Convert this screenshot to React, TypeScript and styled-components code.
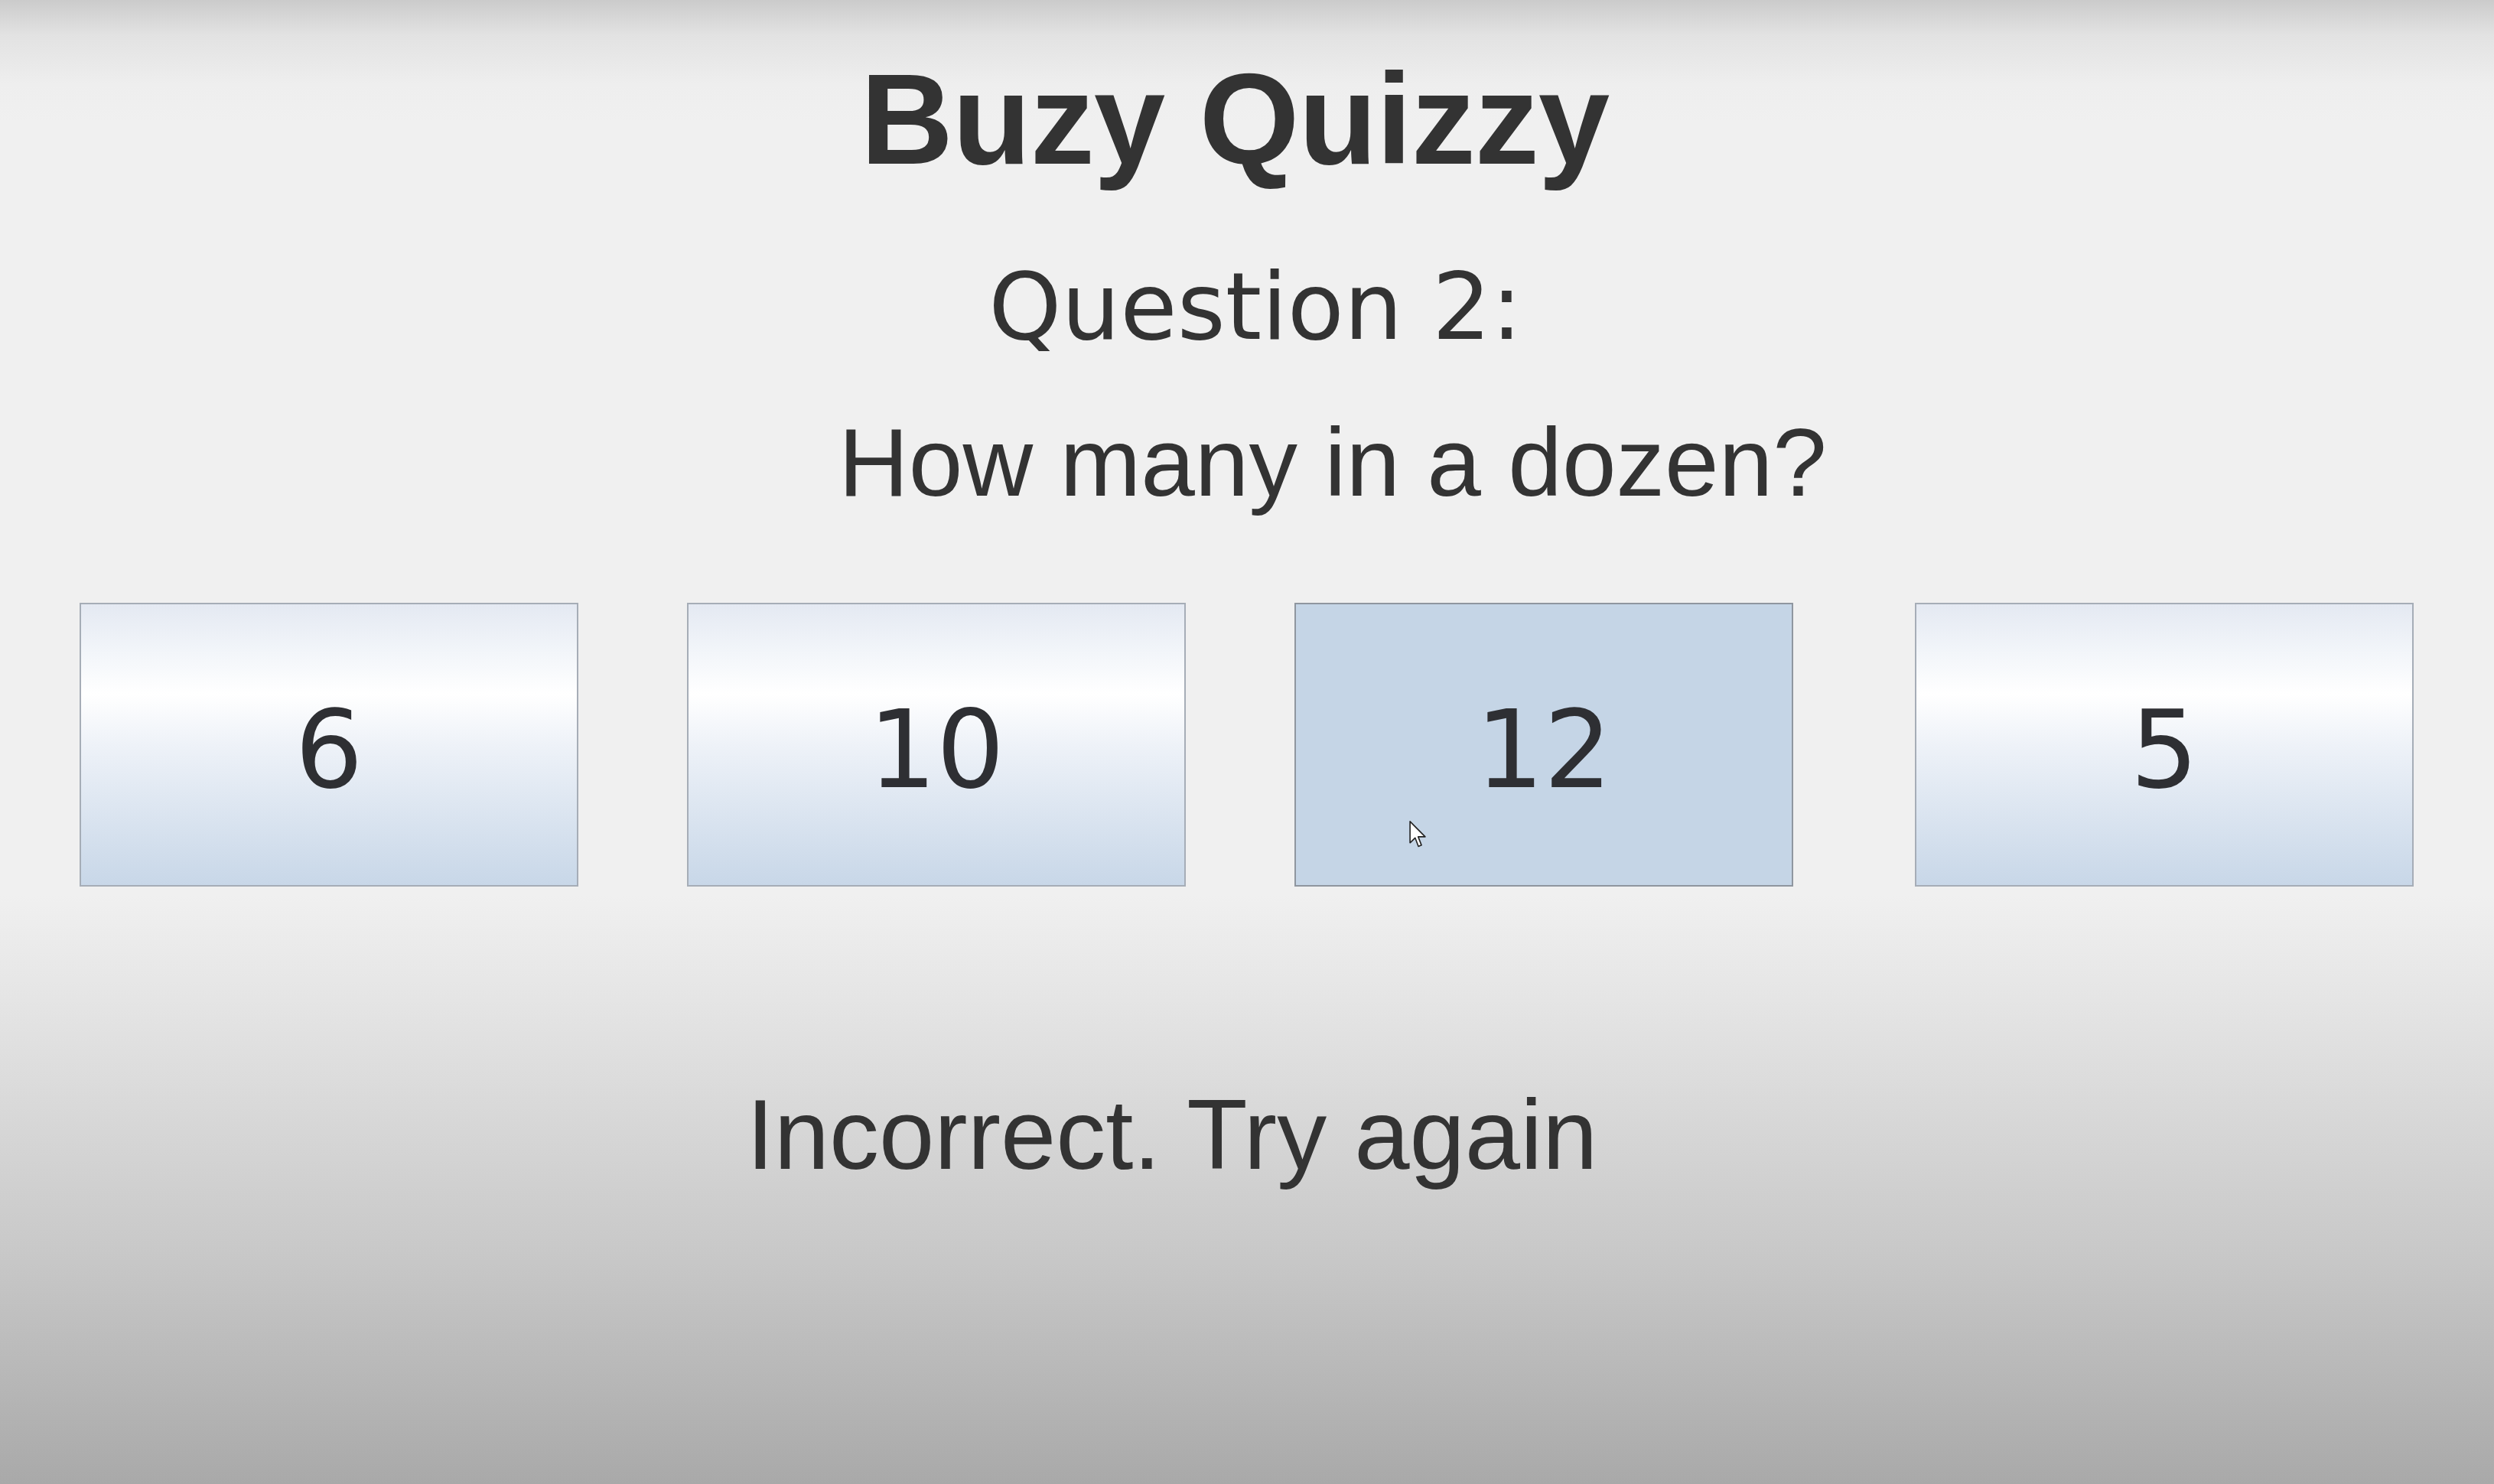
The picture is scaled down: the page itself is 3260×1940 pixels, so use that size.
import React from "react";
import styled, { createGlobalStyle } from "styled-components";

const Global = createGlobalStyle`
  html, body { margin: 0; padding: 0; }
  body { font-family: "Liberation Sans", Arial, sans-serif; }
`;

const Page = styled.div`
  width: 3260px;
  height: 1940px;
  overflow: hidden;
  display: flex;
  flex-direction: column;
  align-items: stretch;
  background: linear-gradient(
    to bottom,
    #cbcbcb 0px,
    #e2e2e2 45px,
    #eeeeee 110px,
    #f0f0f0 160px,
    #f0f0f0 1170px,
    #e3e3e3 1330px,
    #d6d6d6 1480px,
    #c8c8c8 1640px,
    #a9a9a9 1940px
  );
  color: #333333;
`;

const Title = styled.h1`
  margin: 72px 0 0;
  padding-right: 32px;
  text-align: center;
  font-family: "Liberation Sans", Arial, sans-serif;
  font-weight: 700;
  font-size: 168px;
  line-height: 168px;
  letter-spacing: -1px;
  color: #333333;
`;

const QuestionLabel = styled.div`
  margin-top: 101px;
  padding-left: 22px;
  text-align: center;
  font-family: "DejaVu Sans", Verdana, sans-serif;
  font-size: 121px;
  line-height: 121px;
  color: #333333;
`;

const QuestionText = styled.div`
  margin-top: 79px;
  padding-left: 224px;
  text-align: center;
  font-family: "Liberation Sans", Arial, sans-serif;
  font-size: 127px;
  line-height: 127px;
  color: #333333;
`;

const Answers = styled.div`
  margin-top: 120px;
  padding: 0 104px;
  display: flex;
  gap: 142px;
`;

const AnswerButton = styled.button<{ $pressed?: boolean; $extraGap?: number }>`
  position: relative;
  flex: 0 0 652px;
  height: 371px;
  box-sizing: border-box;
  margin: 0 0 0 ${(p) => p.$extraGap ?? 0}px;
  padding: 14px 0 0;
  border: 2px solid ${(p) => (p.$pressed ? "#8f969f" : "#a6adb7")};
  display: flex;
  align-items: center;
  justify-content: center;
  font-family: "DejaVu Sans", Verdana, sans-serif;
  font-size: 140px;
  line-height: 1;
  color: #2e2f33;
  cursor: default;
  background: ${(p) =>
    p.$pressed
      ? "#c5d5e6"
      : `linear-gradient(to bottom,
          #e4e9f2 0%,
          #f3f6fa 18%,
          #ffffff 32%,
          #eef2f8 50%,
          #dde6f1 72%,
          #c8d7e8 100%)`};
`;

const Cursor = styled.svg`
  position: absolute;
  left: 148px;
  top: 283px;
  width: 22px;
  height: 36px;
`;

const Feedback = styled.div`
  margin-top: 259px;
  padding-right: 196px;
  text-align: center;
  font-family: "Liberation Sans", Arial, sans-serif;
  font-size: 130px;
  line-height: 130px;
  color: #333333;
`;

const answers = ["6", "10", "12", "5"];

export default function App() {
  return (
    <>
      <Global />
      <Page>
        <Title>Buzy Quizzy</Title>
        <QuestionLabel>Question 2:</QuestionLabel>
        <QuestionText>How many in a dozen?</QuestionText>
        <Answers>
          {answers.map((a, i) => (
            <AnswerButton key={a} $pressed={a === "12"} $extraGap={i === 3 ? 17 : 0}>
              {a}
              {a === "12" && (
                <Cursor viewBox="0 0 12 20">
                  <path
                    d="M0.5 0.5 L0.5 16 L4.2 12.4 L6.6 18.6 L8.8 17.7 L6.4 11.6 L11.5 11.6 Z"
                    fill="#ffffff"
                    stroke="#222222"
                    strokeWidth="0.9"
                    strokeLinejoin="round"
                  />
                </Cursor>
              )}
            </AnswerButton>
          ))}
        </Answers>
        <Feedback>Incorrect. Try again</Feedback>
      </Page>
    </>
  );
}
